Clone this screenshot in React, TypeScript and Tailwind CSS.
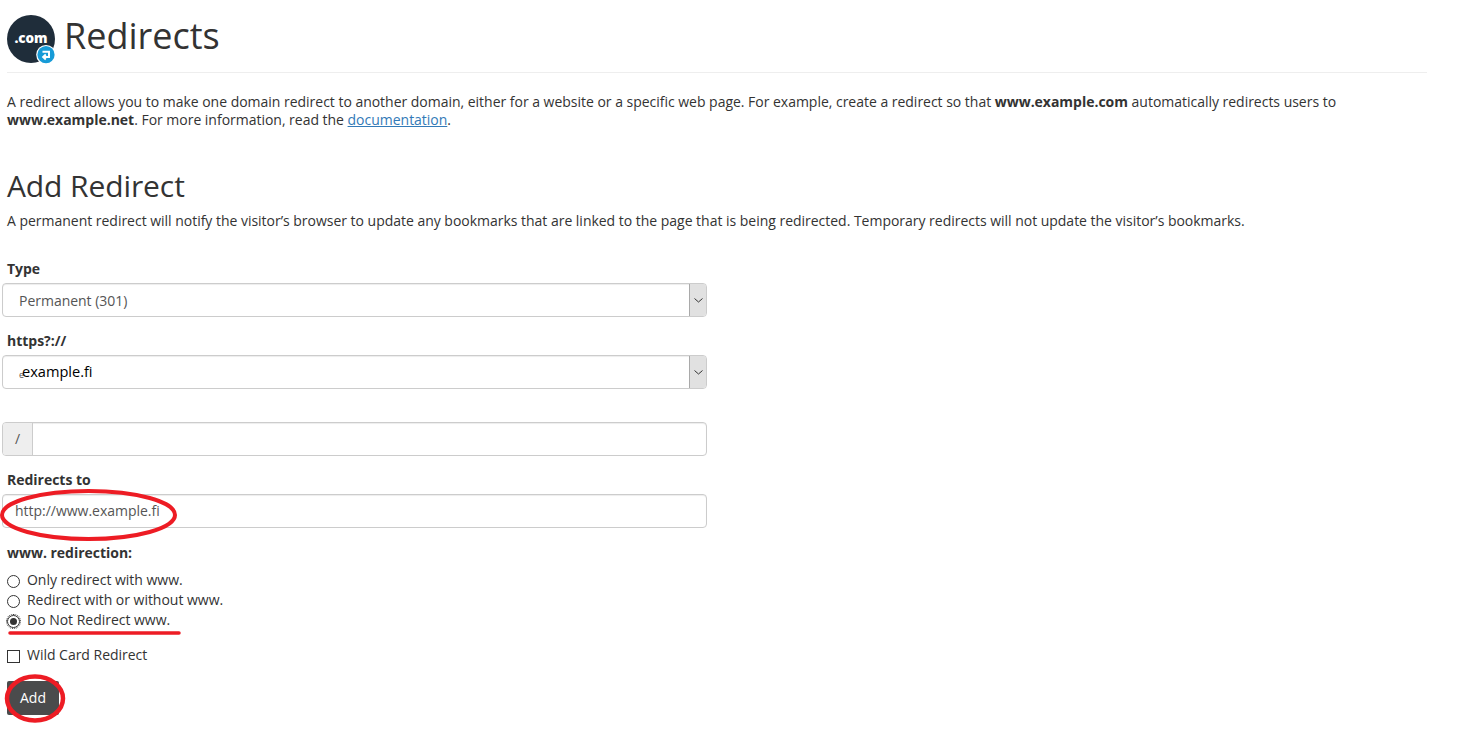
const Field = ({ children, className = "" }: { children: React.ReactNode; className?: string }) => (
  <div className={`h-[34px] w-[705px] -ml-[5px] flex border border-[#ccc] rounded-[4px] bg-white shadow-[inset_0_1px_1px_rgba(0,0,0,0.075)] ${className}`}>
    {children}
  </div>
);

const SelectBox = ({ children }: { children: React.ReactNode }) => (
  <Field className="items-stretch">
    <div className="flex-1 flex items-center pl-4">{children}</div>
    <div className="w-[17px] flex items-center justify-center bg-[#e1e1e1] border-l border-[#a9a9a9] rounded-r-[3px]">
      <svg width="9" height="5" viewBox="0 0 9 5" fill="none" stroke="#333" strokeWidth="1">
        <path d="M0.5 0.5 L4.5 4 L8.5 0.5" />
      </svg>
    </div>
  </Field>
);

const Label = ({ children, className = "" }: { children: React.ReactNode; className?: string }) => (
  <div className={`font-bold text-[14px] leading-[20px] text-[#333] ${className}`}>{children}</div>
);

const Radio = ({ label, checked }: { label: string; checked?: boolean }) => (
  <div className="flex items-center h-[20px]">
    <span className={`w-[13px] h-[13px] rounded-full border border-[#333] bg-white flex items-center justify-center mt-[2px] ${checked ? "outline-1 outline-dotted outline-[#333]" : ""}`}>
      {checked && <span className="w-[7px] h-[7px] rounded-full bg-[#333]" />}
    </span>
    <span className="ml-[7px]">{label}</span>
  </div>
);

const Logo = () => (
  <svg width="48" height="50" viewBox="0 0 48 50" className="shrink-0">
    <circle cx="24" cy="24" r="24" fill="#1f2d3a" />
    <text x="24" y="28" textAnchor="middle" fill="#fff" fontSize="13.5" fontWeight="800" fontFamily="'Open Sans', sans-serif">.com</text>
    <circle cx="39" cy="39.7" r="9.8" fill="#fff" />
    <circle cx="39" cy="39.7" r="8.6" fill="#179bd7" />
    <path d="M35.5 36.8h6.5v5.2h-5.5M38.8 39.6l-2.6 2.4 2.6 2.4" fill="none" stroke="#fff" strokeWidth="2" />
  </svg>
);

const App = () => {
  return (
    <div className="relative w-[1477px] h-[730px] overflow-hidden bg-white text-[14px] leading-[20px] tracking-[-0.02px] text-[#333] font-['Open_Sans',sans-serif]">
      <div className="w-[1420px] ml-[7px]">
        <div className="flex items-start pt-[15px] h-[73px] border-b border-[#eee]">
          <Logo />
          <h1 className="ml-[9px] mt-[1px] text-[36px] leading-[40px] font-normal tracking-normal">Redirects</h1>
        </div>

        <p className="mt-[20px] leading-[18px]">
          A redirect allows you to make one domain redirect to another domain, either for a website or a specific web page. For example, create a redirect so that <b>www.example.com</b> automatically redirects users to
          <br />
          <b>www.example.net</b>. For more information, read the <a className="text-[#337ab7] underline">documentation</a>.
        </p>

        <h2 className="mt-[40px] text-[30px] leading-[33px] font-normal tracking-[-0.1px]">Add Redirect</h2>
        <p className="mt-[9px]">A permanent redirect will notify the visitor’s browser to update any bookmarks that are linked to the page that is being redirected. Temporary redirects will not update the visitor’s bookmarks.</p>

        <Label className="mt-[28px]">Type</Label>
        <div className="mt-[4px]">
          <SelectBox><span className="text-[#555] mt-[1px]">Permanent (301)</span></SelectBox>
        </div>

        <Label className="mt-[14px]">https?://</Label>
        <div className="mt-[4px]">
          <SelectBox>
            <span className="text-[#555] text-[9px] leading-none mt-[5px]">e</span>
            <span className="text-black text-[14.6px] -ml-[2px] -mt-[3px]">example.fi</span>
          </SelectBox>
        </div>

        <div className="mt-[33px]">
          <Field>
            <div className="w-[30px] flex items-center justify-center bg-[#eee] border-r border-[#ccc] rounded-l-[3px] text-[#555]">/</div>
            <div className="flex-1" />
          </Field>
        </div>

        <Label className="mt-[14px]">Redirects to</Label>
        <div className="mt-[4px]">
          <Field className="items-center pl-3 text-[#555]">http://www.example.fi</Field>
        </div>

        <Label className="mt-[15px]">www. redirection:</Label>
        <div className="mt-[7px]">
          <Radio label="Only redirect with www." />
          <Radio label="Redirect with or without www." />
          <Radio label="Do Not Redirect www." checked />
        </div>

        <div className="flex items-center h-[20px] mt-[15px]">
          <span className="w-[13px] h-[13px] border border-[#333] bg-white mt-[2px]" />
          <span className="ml-[7px]">Wild Card Redirect</span>
        </div>

        <button className="mt-[16px] h-[34px] w-[52px] bg-[#4a4b4c] text-white rounded-[2px] flex items-center justify-center">Add</button>
      </div>

      {/* red hand-drawn markup */}
      <svg className="absolute left-0 top-0 pointer-events-none" width="1477" height="730" fill="none" stroke="#ed1c24">
        <ellipse cx="88.5" cy="515" rx="86.5" ry="24" strokeWidth="4" />
        <path d="M10 633 H179" strokeWidth="3.5" strokeLinecap="round" />
        <ellipse cx="35" cy="698.5" rx="28" ry="22" strokeWidth="4.5" />
      </svg>
    </div>
  );
};

export default App;
